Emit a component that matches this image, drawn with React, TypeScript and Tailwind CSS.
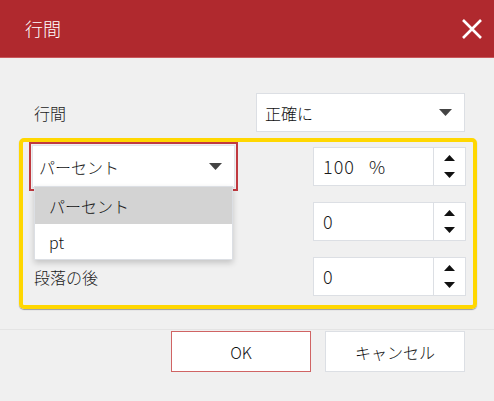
import React from "react";

const font = { fontFamily: '"Noto Sans CJK JP", "Noto Sans", sans-serif' };

function Caret({ className = "" }: { className?: string }) {
  return (
    <svg width="13" height="7" viewBox="0 0 13 7" className={className}>
      <path d="M0 0 H13 L6.5 7 Z" fill="#444" />
    </svg>
  );
}

function Spin({ value, unit }: { value: string; unit?: string }) {
  return (
    <div className="flex h-[39px] w-[153px] border border-[#dcdfe4] bg-white">
      <div className="flex flex-1 items-center gap-[14px] pl-[9px] text-[18px] text-[#1a1a1a]">
        <span className="tracking-[1px]">{value}</span>
        {unit && <span>{unit}</span>}
      </div>
      <div className="flex w-[32px] flex-col items-center justify-center gap-[11px] border-l border-[#dcdfe4]">
        <svg width="11" height="6" viewBox="0 0 11 6">
          <path d="M0 6 H11 L5.5 0 Z" fill="#111" />
        </svg>
        <svg width="11" height="6" viewBox="0 0 11 6">
          <path d="M0 0 H11 L5.5 6 Z" fill="#111" />
        </svg>
      </div>
    </div>
  );
}

export default function App() {
  return (
    <div className="h-[401px] w-[494px] overflow-hidden bg-[#f0f0f0] font-light" style={font}>
      {/* Header */}
      <div className="flex h-[58px] items-center justify-between border-b border-[#c9585c] bg-[#b0292e] pl-[25px] pr-[12px]">
        <span className="text-[18px] text-white">行間</span>
        <svg width="20" height="20" viewBox="0 0 20 20">
          <path d="M1 1 L19 19 M19 1 L1 19" stroke="#fff" strokeWidth="2.6" />
        </svg>
      </div>

      {/* Line spacing row */}
      <div className="mt-[35px] flex items-center justify-between pl-[34px] pr-[29px]">
        <span className="text-[16px] text-[#1a1a1a]">行間</span>
        <div className="flex h-[39px] w-[209px] items-center justify-between border border-[#dcdfe4] bg-white pl-[8px] pr-[12px]">
          <span className="text-[16px] text-[#111]">正確に</span>
          <Caret />
        </div>
      </div>

      {/* Highlighted group */}
      <div className="ml-[19px] mt-[6px] h-[171px] w-[458px] rounded-[5px] border-4 border-[#ffd700] shadow-[0_1px_1px_rgba(0,0,0,0.35)]">
        <div className="relative flex flex-col gap-[16px] pl-[6px] pr-[7px] pt-[5px]">
          <div className="flex h-[39px] items-center justify-between">
            <div className="-mt-[10px] -mb-[10px] flex h-[49px] w-[209px] border-2 border-[#c0393f] p-[1px]">
              <div className="flex flex-1 items-center justify-between border border-[#e2e4e8] bg-white pl-[6px] pr-[12px]">
                <span className="text-[16px] text-[#111]">パーセント</span>
                <Caret />
              </div>
            </div>
            <Spin value="100" unit="%" />
          </div>
          <div className="flex h-[39px] items-center justify-between">
            <span className="pl-[5px] text-[16px] text-[#1a1a1a]">段落の前</span>
            <Spin value="0" />
          </div>
          <div className="flex h-[39px] items-center justify-between">
            <span className="pl-[5px] text-[16px] text-[#1a1a1a]">段落の後</span>
            <Spin value="0" />
          </div>

          {/* Open dropdown list */}
          <div className="absolute left-[11px] top-[44px] w-[199px] border border-[#dcdfe4] bg-white shadow-[0_3px_6px_rgba(0,0,0,0.18)]">
            <div className="flex h-[37px] items-center bg-[#d3d3d3] pl-[14px] text-[16px] text-[#111]">パーセント</div>
            <div className="flex h-[35px] items-center pl-[14px] text-[16px] text-[#111]">pt</div>
          </div>
        </div>
      </div>

      {/* Footer */}
      <div className="mt-[20px] flex justify-end gap-[14px] border-t border-[#e4e4e4] pr-[29px] pt-[1px]">
        <button className="h-[41px] w-[140px] border border-[#d06464] bg-white text-[16px] text-[#111]">OK</button>
        <button className="h-[41px] w-[140px] border border-[#dcdfe4] bg-white text-[16px] text-[#111]">キャンセル</button>
      </div>
    </div>
  );
}
